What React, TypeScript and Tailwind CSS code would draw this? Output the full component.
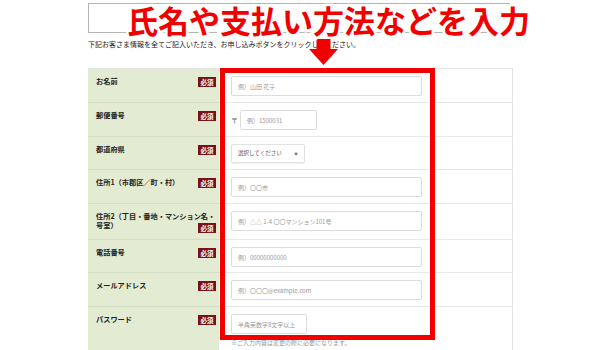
const rows = [
  { label: "お名前", h: "h-[34px]", kind: "full", ph: "例）山田 花子" },
  { label: "郵便番号", h: "h-[34px]", kind: "zip", ph: "例）1500031" },
  { label: "都道府県", h: "h-[33px]", kind: "select", ph: "選択してください" },
  { label: "住所1（市郡区／町・村）", h: "h-[34px]", kind: "full", ph: "例）〇〇市" },
  { label: "住所2", h: "h-[36px]", kind: "full", ph: "例）△△ 1-4 〇〇マンション101号" },
  { label: "電話番号", h: "h-[33px]", kind: "full", ph: "例）00000000000" },
  { label: "メールアドレス", h: "h-[34px]", kind: "full", ph: "例）〇〇〇@example.com" },
  { label: "パスワード", h: "h-[48px]", kind: "pass", ph: "半角英数字8文字以上" },
];

function Badge() {
  return (
    <span className="flex h-[10px] w-[18px] shrink-0 items-center justify-center bg-[#7a1214] text-[6.5px] font-bold leading-none text-white">
      必須
    </span>
  );
}

function Field({ kind, ph }: { kind: string; ph: string }) {
  if (kind === "zip") {
    return (
      <div className="flex items-center gap-[2px]">
        <span className="text-[7px] text-[#555]">〒</span>
        <div className="flex h-[20px] w-[77px] items-center rounded-[2px] border border-[#dcdcdc] px-[6px] text-[6px] text-[#999]">
          {ph}
        </div>
      </div>
    );
  }
  if (kind === "select") {
    return (
      <div className="flex h-[19px] w-[74px] items-center justify-between rounded-[2px] border border-[#e2e2e2] px-[6px] text-[5.5px] text-[#555] shadow-[0_1px_1px_rgba(0,0,0,0.06)]">
        {ph}
        <span className="text-[4px] text-[#777]">▼</span>
      </div>
    );
  }
  if (kind === "pass") {
    return (
      <div className="flex h-[20px] w-[76px] items-center rounded-[2px] border border-[#dcdcdc] px-[6px] text-[6px] text-[#999]">
        {ph}
      </div>
    );
  }
  return (
    <div className="flex h-[20px] w-[191px] items-center rounded-[2px] border border-[#dcdcdc] px-[6px] text-[6px] text-[#999]">
      {ph}
    </div>
  );
}

export default function App() {
  return (
    <div className="relative h-[350px] w-[600px] overflow-hidden bg-white font-['Noto_Sans_CJK_JP',sans-serif]">
      <div className="pl-[88px] pt-[3px]">
        {/* 見出しボックス */}
        <div className="h-[30px] w-[422px] border border-[#b4b4b4]" />

        <p className="mt-[6px] text-[7px] leading-[10px] text-[#222]">
          下記お客さま情報を全てご記入いただき、お申し込みボタンをクリックしてください。
        </p>

        {/* 入力テーブル */}
        <div className="mt-[19px] w-[425px] border-t border-r border-[#e4e4e4]">
          {rows.map((r, i) => (
            <div key={i} className={`grid grid-cols-[131px_294px] ${r.h}`}>
              <div className="border-b border-[#d6dfc6] bg-[#e3ecd2] pl-[8px] pr-[3px] pt-[8px] text-[7.2px] font-bold leading-[9px] text-[#222]">
                {r.label === "住所2" ? (
                  <div>
                    <div className="whitespace-nowrap">住所2（丁目・番地・マンション名・</div>
                    <div className="flex items-start justify-between">
                      <span>号室）</span>
                      <div className="mt-[2px]">
                        <Badge />
                      </div>
                    </div>
                  </div>
                ) : (
                  <div className="flex items-start justify-between">
                    <span>{r.label}</span>
                    <Badge />
                  </div>
                )}
              </div>
              <div className="border-b border-[#e8e8e8] pl-[12px] pt-[7px]">
                <Field kind={r.kind} ph={r.ph} />
                {r.kind === "pass" && (
                  <p className="mt-[5px] text-[6px] leading-[8px] text-[#999]">
                    ※ご入力内容は変更の際に必要になります。
                  </p>
                )}
              </div>
            </div>
          ))}
        </div>
      </div>

      {/* 注釈：赤枠 */}
      <div className="absolute left-[220px] top-[68px] h-[272px] w-[215px] border-[5px] border-[#f20000]" />

      {/* 注釈：矢印 */}
      <svg className="absolute left-[309px] top-[39px]" width="30" height="27" viewBox="0 0 30 27">
        <rect x="7.5" y="0" width="14" height="11" fill="#f20000" />
        <polygon points="0,10 29,10 14.5,26" fill="#f20000" />
      </svg>

      {/* 注釈：見出し */}
      <div className="absolute left-[127px] top-[1px] text-[31px] font-bold leading-[38px] text-[#f20000] [-webkit-text-stroke:5px_#fff] [paint-order:stroke_fill]">
        氏名や支払い方法などを入力
      </div>
    </div>
  );
}
